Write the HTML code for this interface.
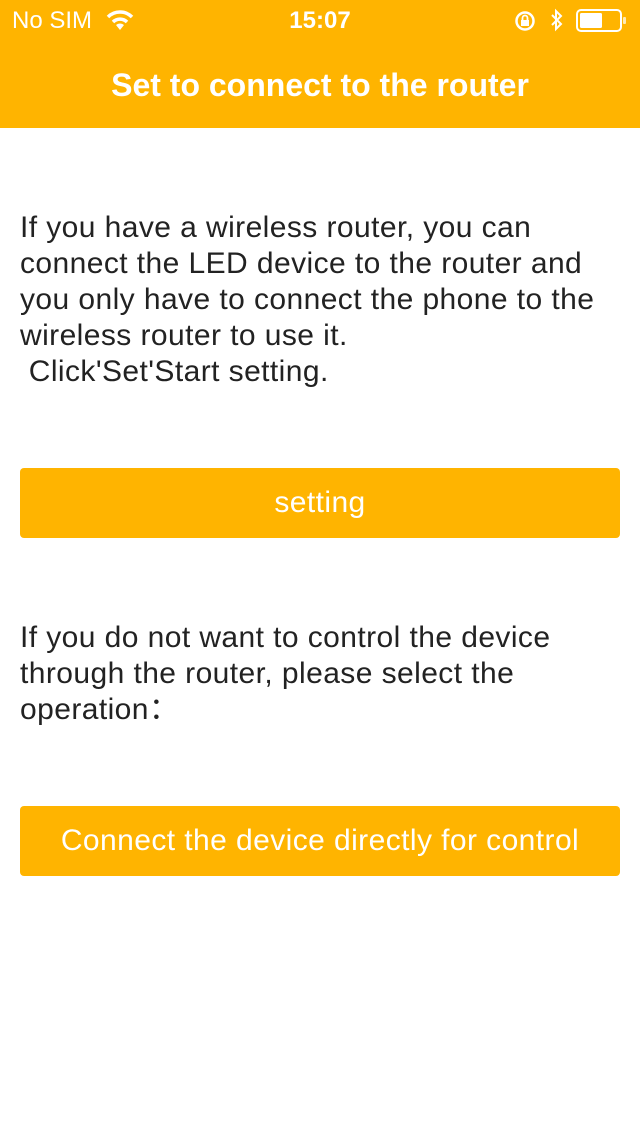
<!DOCTYPE html>
<html><head><meta charset="utf-8"><style>
*{margin:0;padding:0;box-sizing:border-box}
body{width:640px;height:1136px;background:#fff;font-family:"Liberation Sans",sans-serif;position:relative;overflow:hidden}
.hdr{position:absolute;left:0;top:0;width:640px;height:128px;background:#FFB400;color:#fff}
.sb{position:absolute;top:6px;font-size:24px;line-height:30px}
.title{position:absolute;top:65px;width:100%;text-align:center;font-size:32px;font-weight:bold;line-height:40px}
.p{position:absolute;left:20px;width:620px;font-size:30px;letter-spacing:0.42px;line-height:36px;color:#222;white-space:nowrap}
.btn{position:absolute;left:20px;width:600px;height:70px;background:#FFB400;border-radius:4px;color:#fff;font-size:30px;letter-spacing:0.42px;line-height:70px;text-align:center;white-space:nowrap}
</style></head><body>
<div class="hdr">
<div class="sb" style="left:12px">No SIM</div>
<svg style="position:absolute;left:106px;top:9px" width="28" height="22" viewBox="0 0 28 22"><path d="M2 8 A17 17 0 0 1 26 8" stroke="#fff" stroke-width="3.5" fill="none"/><path d="M7 13 A10 10 0 0 1 21 13" stroke="#fff" stroke-width="3.5" fill="none"/><path d="M10 16 L14 21 L18 16 A6 6 0 0 0 10 16Z" fill="#fff"/></svg>
<div class="sb" style="left:0;width:640px;text-align:center;font-weight:bold">15:07</div>
<svg style="position:absolute;left:514px;top:10px" width="22" height="22" viewBox="0 0 22 22"><circle cx="11" cy="11" r="8.5" stroke="#fff" stroke-width="2.5" fill="none"/><rect x="7" y="10" width="8" height="6" fill="#fff"/><path d="M8.5 10 V8 a2.5 2.5 0 0 1 5 0 V10" stroke="#fff" stroke-width="1.8" fill="none"/></svg>
<svg style="position:absolute;left:550px;top:8px" width="14" height="24" viewBox="0 0 14 24"><path d="M2 7 L11 16 L6 21 V3 L11 8 L2 17" stroke="#fff" stroke-width="2" fill="none"/></svg>
<svg style="position:absolute;left:576px;top:9px" width="52" height="24" viewBox="0 0 52 24"><rect x="1" y="1" width="44" height="21" rx="4" stroke="#fff" stroke-width="2" fill="none"/><rect x="4" y="4" width="22" height="15" rx="1.5" fill="#fff"/><rect x="47" y="8" width="3" height="7" rx="1" fill="#fff" opacity=".7"/></svg>
<div class="title">Set to connect to the router</div>
</div>
<div class="p" style="top:210px">If you have a wireless router, you can<br>connect the LED device to the router and<br>you only have to connect the phone to the<br>wireless router to use it.<br>&nbsp;Click'Set'Start setting.</div>
<div class="btn" style="top:468px">setting</div>
<div class="p" style="top:620px">If you do not want to control the device<br>through the router, please select the<br>operation：</div>
<div class="btn" style="top:806px">Connect the device directly for control</div>
</body></html>
